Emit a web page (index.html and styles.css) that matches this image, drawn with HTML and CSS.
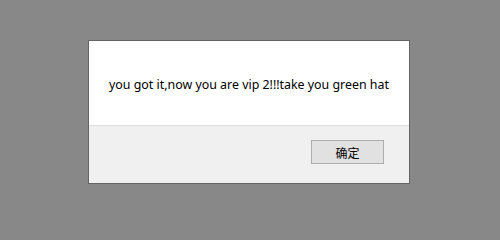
FILE: index.html
```html
<!DOCTYPE html>
<html lang="zh">
<head>
<meta charset="utf-8">
<title>alert</title>
<link rel="stylesheet" href="styles.css">
</head>
<body>
<div class="dialog">
  <div class="dialog-body">you got it,now you are vip 2!!!take you green hat</div>
  <div class="dialog-footer">
    <button class="btn" type="button">确定</button>
  </div>
</div>
</body>
</html>
```
FILE: styles.css
```css
html, body {
  margin: 0;
  padding: 0;
  background: #888888;
}
body {
  padding-top: 40px;
  padding-left: 88px;
  font-family: "Noto Sans", "Noto Sans CJK SC", sans-serif;
}
.dialog {
  width: 322px;
  box-sizing: border-box;
  border: 1px solid #646464;
  background: #ffffff;
}
.dialog-body {
  height: 85px;
  box-sizing: border-box;
  padding-top: 36px;
  font-size: 12.4px;
  line-height: 16px;
  color: #000;
  text-align: center;
  border-bottom: 1px solid #dfdfdf;
}
.dialog-footer {
  height: 57px;
  box-sizing: border-box;
  background: #f0f0f0;
  padding: 14px 25px 0 0;
  display: flex;
  justify-content: flex-end;
  align-items: flex-start;
}
.btn {
  width: 73px;
  height: 24px;
  box-sizing: border-box;
  border: 1px solid #adadad;
  background: #e1e1e1;
  font-family: "Noto Sans CJK SC", sans-serif;
  font-size: 12px;
  color: #000;
  padding: 0;
  margin: 0;
}
```
